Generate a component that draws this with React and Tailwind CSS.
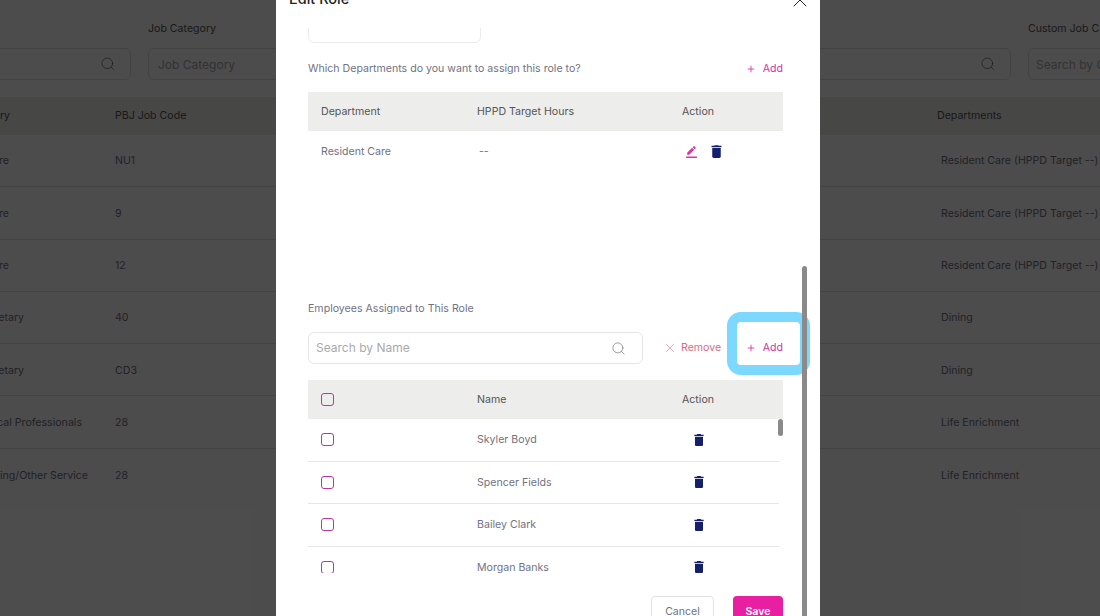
import { Search, X, Plus } from "lucide-react";

const bgRows = [
  { cat: "Resident Care", end: "pr-[106px]", code: "NU1", dept: "Resident Care (HPPD Target --)" },
  { cat: "Resident Care", end: "pr-[106px]", code: "9", dept: "Resident Care (HPPD Target --)" },
  { cat: "Resident Care", end: "pr-[106px]", code: "12", dept: "Resident Care (HPPD Target --)" },
  { cat: "Dietary", end: "pr-[91px]", code: "40", dept: "Dining" },
  { cat: "Dietary", end: "pr-[91px]", code: "CD3", dept: "Dining" },
  { cat: "Medical Professionals", end: "pr-[33px]", code: "28", dept: "Life Enrichment" },
  { cat: "Nursing/Other Service", end: "pr-[27px]", code: "28", dept: "Life Enrichment" },
];

const employees = ["Skyler Boyd", "Spencer Fields", "Bailey Clark", "Morgan Banks"];

function Trash({ className }) {
  return (
    <svg viewBox="0 0 24 24" className={className} fill="#14206e">
      <path d="M6 19c0 1.1.9 2 2 2h8c1.1 0 2-.9 2-2V7H6v12zM19 4h-3.5l-1-1h-5l-1 1H5v2h14V4z" />
    </svg>
  );
}

function Pencil({ className }) {
  return (
    <svg viewBox="0 0 24 24" className={className} fill="#e02fa8">
      <path d="M22 24H2v-3h20v3zM13.06 5.19l3.75 3.75L7.75 18H4v-3.75l9.06-9.06zm4.82 2.68l-3.75-3.75 1.83-1.83a.996.996 0 0 1 1.41 0l2.34 2.34c.39.39.39 1.02 0 1.41l-1.83 1.83z" />
    </svg>
  );
}

function Check() {
  return <div className="w-[13px] h-[13px] rounded-[3px] border-[1.5px] border-[#b8389a] shrink-0" />;
}

function AddLink() {
  return (
    <div className="flex items-center gap-[7px] text-[#d62fa2]">
      <Plus size={10} strokeWidth={2} />
      <span>Add</span>
    </div>
  );
}

export default function App() {
  return (
    <div className="relative w-[1100px] h-[616px] overflow-hidden bg-white text-[10.6px] text-[#72727f] font-['Inter',sans-serif]">
      {/* page behind the dialog */}
      <div className="flex gap-[17px] pt-[21px] -ml-[120px] w-[1400px]">
        <div className="w-[251px] shrink-0">
          <div className="h-[14px] mb-[13px]" />
          <div className="h-[32px] border border-[#e2e2e2] rounded-md flex items-center justify-end pr-[14px]">
            <Search size={16} strokeWidth={1} className="text-[#555]" />
          </div>
        </div>
        <div className="w-[200px] shrink-0">
          <div className="h-[14px] mb-[13px] text-[#555]">Job Category</div>
          <div className="h-[32px] pt-[1px] border border-[#e2e2e2] rounded-md flex items-center pl-[9px] text-[12px] text-[#aaa]">Job Category</div>
        </div>
        <div className="w-[584px] shrink-0 ml-[62px]">
          <div className="h-[14px] mb-[13px]" />
          <div className="h-[32px] border border-[#e2e2e2] rounded-md flex items-center justify-end pr-[14px]">
            <Search size={16} strokeWidth={1} className="text-[#555]" />
          </div>
        </div>
        <div className="w-[200px] shrink-0">
          <div className="h-[14px] mb-[13px] text-[#555]">Custom Job Category</div>
          <div className="h-[32px] pt-[1px] border border-[#e2e2e2] rounded-md flex items-center pl-[7px] text-[12px] text-[#aaa]">Search by Custom</div>
        </div>
      </div>

      <div className="mt-[17px]">
        <div className="h-[38px] bg-[#ededec] flex items-center text-[#555] -ml-[23px]">
          <div className="w-[138px] shrink-0 flex justify-end pr-[105px] whitespace-nowrap">Job Category</div>
          <div className="w-[822px] shrink-0">PBJ Job Code</div>
          <div>Departments</div>
        </div>
        {bgRows.map((r, i) => (
          <div key={i} className="h-[52.3px] pt-[1.5px] flex items-center border-b last:border-b-0 border-[#e4e4e4] -ml-[23px]">
            <div className={`w-[138px] shrink-0 flex justify-end whitespace-nowrap ${r.end}`}>{r.cat}</div>
            <div className="w-[826px] shrink-0">{r.code}</div>
            <div className="whitespace-nowrap">{r.dept}</div>
          </div>
        ))}
      </div>

      {/* overlay */}
      <div className="absolute inset-0 bg-black/70" />

      {/* dialog */}
      <div className="absolute left-[276px] top-0 w-[544px] h-[616px] overflow-hidden bg-white">
        <div className="flex items-center justify-between -mt-[12px] h-[24px] pl-[13px] pr-[8px]">
          <span className="-mt-[3px] text-[14.5px] font-medium text-[#222]">Edit Role</span>
          <X size={24} strokeWidth={1} className="text-[#222]" />
        </div>

        <div className="pl-[32px] pr-[37px]">
          <div className="mt-[16px] h-[15px] overflow-hidden flex items-end">
            <div className="w-[173px] h-[32px] shrink-0 border border-[#ececec] rounded-md" />
          </div>

          <div className="flex items-center justify-between h-[14px] mt-[19px]">
            <span>Which Departments do you want to assign this role to?</span>
            <AddLink />
          </div>

          <div className="mt-[16px] h-[39px] bg-[#ededec] flex items-center text-[#555]">
            <div className="w-[169px] pl-[13px]">Department</div>
            <div className="w-[205px]">HPPD Target Hours</div>
            <div>Action</div>
          </div>
          <div className="h-[40px] flex items-center">
            <div className="w-[169px] pl-[13px] pt-[1px]">Resident Care</div>
            <div className="w-[206px] pl-[2px] pt-[1px]">--</div>
            <div className="flex items-center gap-[10px] pl-[2px]">
              <Pencil className="w-[13px] h-[13px]" />
              <Trash className="w-[17px] h-[17px]" />
            </div>
          </div>

          <div className="mt-[131px] h-[14px] flex items-center">Employees Assigned to This Role</div>

          <div className="relative mt-[16px] h-[32px] flex items-center">
            <div className="w-[335px] h-[32px] shrink-0 border border-[#e6e6e6] rounded-md flex items-center justify-between pl-[7px] pr-[16px] text-[12px] text-[#aaa]">
              <span>Search by Name</span>
              <Search size={15} strokeWidth={1} className="text-[#666]" />
            </div>
            <div className="flex items-center gap-[4px] ml-[20px] text-[#df6a7d]">
              <X size={14} strokeWidth={1} />
              <span>Remove</span>
            </div>
            <div className="ml-auto">
              <AddLink />
            </div>
            <div className="absolute left-[419px] -top-[20px] w-[83px] h-[63px] border-[10px] border-[#7dd8ff] rounded-[14px]" />
          </div>

          <div className="mt-[16px] h-[39px] bg-[#ededec] flex items-center text-[#555]">
            <div className="w-[169px] pl-[13px] -mt-[1px]">
              <Check />
            </div>
            <div className="w-[205px]">Name</div>
            <div>Action</div>
          </div>

          <div className="relative h-[154px] overflow-hidden">
            {employees.map((name) => (
              <div key={name} className="h-[42.5px] flex items-center border-b border-[#e6e6e6] mr-[4px]">
                <div className="w-[169px] pl-[13px]">
                  <Check />
                </div>
                <div className="w-[214px] pt-[1px]">{name}</div>
                <Trash className="w-[16px] h-[16px]" />
              </div>
            ))}
            <div className="absolute right-0 top-0 w-[5px] h-[17px] rounded bg-[#8a8a8a]" />
          </div>

          <div className="flex justify-end gap-[19px] mt-[23px]">
            <button className="w-[63px] h-[32px] border border-[#e2e2e2] rounded text-[#72727f]">Cancel</button>
            <button className="w-[50px] h-[32px] rounded bg-[#e81fa0] text-white font-semibold">Save</button>
          </div>
        </div>

        <div className="absolute left-[526px] top-[266px] w-[5px] h-[360px] rounded bg-[#8a8a8a]" />
      </div>
    </div>
  );
}
